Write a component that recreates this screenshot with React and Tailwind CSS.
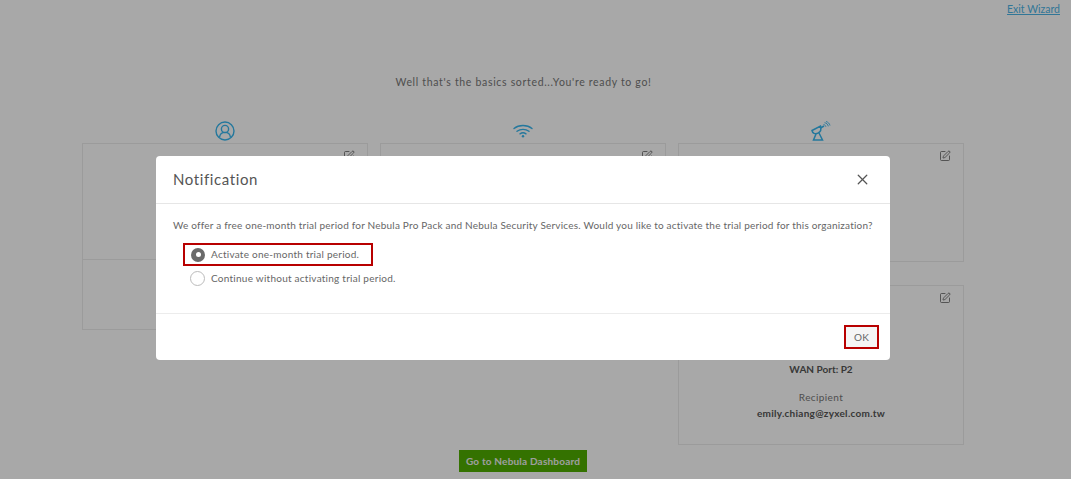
import { SquarePen, X } from 'lucide-react'

const font = { fontFamily: 'Lato, "Noto Sans", sans-serif' }

function PersonIcon() {
  return (
    <svg width="20" height="20" viewBox="0 0 20 20" fill="none" stroke="#38b6ee" strokeWidth="1.4">
      <circle cx="10" cy="10" r="9" />
      <circle cx="10" cy="8" r="3.6" />
      <path d="M4.6 16c.4-3 2.600-4.600 5.400-4.600s5 1.600 5.400 4.600" />
    </svg>
  )
}

function WifiIcon() {
  return (
    <svg width="20" height="14" viewBox="0 0 20 14" fill="none" stroke="#38b6ee" strokeWidth="1.4" strokeLinecap="round">
      <path d="M1 4.500C5.800.5 14.200.5 19 4.500" />
      <path d="M4 7.300c3.400-2.600 8.600-2.600 12 0" />
      <path d="M7 9.800c1.800-1.200 4.200-1.200 6 0" />
      <circle cx="10" cy="12.300" r="1.200" fill="#38b6ee" stroke="none" />
    </svg>
  )
}

function DishIcon() {
  return (
    <svg width="20" height="20" viewBox="0 0 20 20" fill="none" stroke="#38b6ee" strokeWidth="1.5">
      <path d="M1 9.500 9.500 5c1 3 0 6-2.800 7.300C4 13.400 1.500 12.300 1 9.500Z" />
      <path d="M9.500 7l3.500-2" />
      <path d="M5 13l-2.500 6h9L8 12" />
      <path d="M12.500 3.500c1.300.2 2.100 1 2.400 2.300M13.500 1.700c2 .3 3.400 1.700 3.800 3.600M15 .5c2 .5 3.500 2 4 4" strokeWidth="0.9" />
    </svg>
  )
}

function Card({ className, editClass = 'pr-[12px] pt-[6px]', children }) {
  return (
    <div className={`border border-[#ececec] ${className}`}>
      <div className={`flex justify-end ${editClass}`}>
        <SquarePen size={12} className="text-[#555]" strokeWidth={1.5} />
      </div>
      {children}
    </div>
  )
}

export default function App() {
  return (
    <div className="relative w-[1071px] h-[479px] overflow-hidden bg-white text-[#444]" style={font}>
      <div className="flex justify-end pr-[11px] pt-[2px] h-[72px]">
        <a className="text-[10.5px] leading-[14px] text-[#4bb4e6] underline">Exit Wizard</a>
      </div>
      <p className="text-center text-[10.5px] leading-[14px] tracking-[0.68px] text-[#777] pr-[24px] mt-[3px]">
        Well that's the basics sorted...You're ready to go!
      </p>

      <div className="grid grid-cols-[286px_286px_286px] gap-x-3 pl-[82px] mt-[32px]">
        <div className="flex flex-col">
          <div className="flex justify-center h-[22px] items-start"><PersonIcon /></div>
          <Card className="h-[117px]" />
          <div className="h-[70px] border border-t-0 border-[#ececec]" />
        </div>
        <div className="flex flex-col">
          <div className="flex justify-center h-[22px] items-start pt-[3px]"><WifiIcon /></div>
          <Card className="h-[117px]" />
        </div>
        <div className="flex flex-col">
          <div className="flex justify-center h-[22px] items-start"><DishIcon /></div>
          <Card className="h-[119px]" />
          <Card className="h-[160px] mt-[23px] flex flex-col" editClass="pr-[12px] pt-[6px] h-[70px]">
            <p className="text-center text-[10px] leading-[13px] font-bold text-[#555] mt-[7px]">WAN Port: P2</p>
            <p className="text-center text-[10px] leading-[13px] text-[#777] tracking-[0.4px] mt-[15px]">Recipient</p>
            <p className="text-center text-[10px] leading-[13px] font-bold text-[#555] tracking-[0.27px] mt-[3px]">emily.chiang@zyxel.com.tw</p>
          </Card>
        </div>
      </div>

      <div className="absolute left-[459px] top-[450px] flex h-[22px] w-[128px] items-center justify-center bg-[#4fae00] text-[10px] font-bold tracking-[0.2px] text-[#f0f0f0]">
        Go to Nebula Dashboard
      </div>

      {/* backdrop + modal */}
      <div className="absolute inset-0 bg-black/[0.34] pl-[156px] pt-[156px]">
        <div className="w-[734px] h-[204px] rounded-[4px] bg-white flex flex-col">
          <div className="flex h-[48px] items-center justify-between border-b border-[#e6e6e6] pl-[17px] pr-[19px]">
            <h2 className="text-[15px] tracking-[0.6px] text-[#555]">Notification</h2>
            <X size={17} className="text-[#555]" strokeWidth={1.75} />
          </div>
          <div className="h-[110px] border-b border-[#ececec] pl-[17px] pt-[15px]">
            <p className="text-[10px] leading-[13px] tracking-[0.21px] text-[#666]">
              We offer a free one-month trial period for Nebula Pro Pack and Nebula Security Services. Would you like to activate the trial period for this organization?
            </p>
            <div className="ml-[10px] mt-[11px] flex h-[23px] w-[190px] items-center border-2 border-[#b80000] pl-[6px]">
              <span className="flex h-[14px] w-[14px] items-center justify-center rounded-full bg-[#6a6a6a]">
                <span className="h-[5px] w-[5px] rounded-full bg-white" />
              </span>
              <span className="ml-[6px] text-[10px] tracking-[0.25px] text-[#666]">Activate one-month trial period.</span>
            </div>
            <div className="ml-[17px] mt-[1px] flex h-[22px] items-center">
              <span className="h-[15px] w-[15px] rounded-full border border-[#bbb]" />
              <span className="ml-[6px] text-[10px] tracking-[0.25px] text-[#666]">Continue without activating trial period.</span>
            </div>
          </div>
          <div className="flex flex-1 items-center justify-end pr-[11px]">
            <button className="flex h-[24px] w-[35px] items-center justify-center border-2 border-[#b80000] bg-[#f5f5f5] text-[10px] tracking-[0.3px] text-[#666]">OK</button>
          </div>
        </div>
      </div>
    </div>
  )
}
